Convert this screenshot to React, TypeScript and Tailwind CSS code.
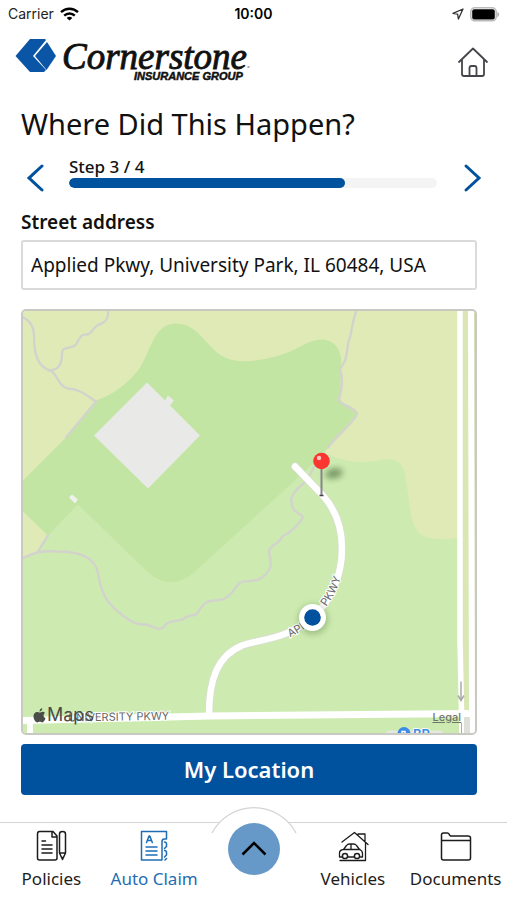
import { ReactNode, useState } from 'react';

const STEP = 3;
const TOTAL_STEPS = 4;

interface NavItemProps {
  label: string;
  active?: boolean;
  children: ReactNode;
}

function NavItem({ label, active = false, children }: NavItemProps) {
  return (
    <a
      href="#"
      aria-current={active ? 'page' : undefined}
      className={`flex flex-col items-center gap-1 pt-1.5 text-[17px] leading-6 whitespace-nowrap ${active ? 'text-[#1f6db5]' : 'text-[#1c1c1c]'}`}
    >
      <svg width="34" height="34" viewBox="0 0 34 34" fill="none" stroke="currentColor" strokeWidth="1.5" strokeLinecap="round" strokeLinejoin="round" aria-hidden="true">
        {children}
      </svg>
      {label}
    </a>
  );
}

function StatusBar() {
  return (
    <div className="grid h-7 grid-cols-3 items-center px-2 font-[Inter,sans-serif] text-sm text-[#222]">
      <div className="flex items-center gap-1.5">
        <span>Carrier</span>
        <svg width="19" height="14" viewBox="0 0 19 14" fill="none" stroke="#000" strokeWidth="2.4" aria-label="Wi-Fi">
          <path d="M1 5.2C5.8 .6 13.2 .6 18 5.2" />
          <path d="M4.2 8.6c3-2.9 7.6-2.9 10.6 0" />
          <path d="M9.5 13.6 6.7 10.9c1.6-1.5 4-1.5 5.6 0Z" fill="#000" stroke="none" />
        </svg>
      </div>
      <span className="text-center font-semibold text-black">10:00</span>
      <div className="flex items-center justify-end gap-1.5">
        <svg width="12" height="12" viewBox="0 0 12 12" fill="none" stroke="#333" strokeWidth="1.3" strokeLinejoin="round" aria-label="Location">
          <path d="M11 1 1 5.400l4.600.7.8 4.900Z" />
        </svg>
        <svg width="29" height="15" viewBox="0 0 29 15" aria-label="Battery">
          <rect x=".8" y=".8" width="25.4" height="13" rx="4" fill="#fff" stroke="#bbb" strokeWidth="1.6" />
          <rect x="2.2" y="2.2" width="22.6" height="10.2" rx="2" fill="#000" />
          <path d="M27.400 5v5c2.200-.7 2.200-4.300 0-5Z" fill="#aaa" />
        </svg>
      </div>
    </div>
  );
}

function Logo() {
  return (
    <svg width="240" height="48" viewBox="12 37 240 48" role="img" aria-label="Cornerstone Insurance Group">
      <path d="M30 39h15l1 1-13 16 13 14-2 2H30L15.500 56Z" fill="#0a55a5" />
      <path d="m47 42 9 14-9.500 14L35 56Z" fill="#0a55a5" />
      <text x="62" y="69" fontFamily="Liberation Serif, serif" fontStyle="italic" fontSize="37" fill="#111" stroke="#111" strokeWidth=".9">
        Cornerstone
      </text>
      <path d="M247.500 67h2" stroke="#555" />
      <text x="134" y="80" fontFamily="Liberation Sans, sans-serif" fontStyle="italic" fontWeight="700" fontSize="11" fill="#111" stroke="#111" strokeWidth=".5">
        INSURANCE GROUP
      </text>
    </svg>
  );
}

function MapView() {
  return (
    <div className="relative min-h-80 flex-1 overflow-hidden rounded-[5px] border-2 border-[#c9c9c4]">
      <svg className="absolute inset-0 h-full w-full" viewBox="23 310 452 423" preserveAspectRatio="xMidYMid slice" role="img" aria-label="Map of Applied Pkwy">
        <defs>
          <path id="applied" d="M290 637Q304 630 315 620C328 606 338 590 343 571" />
          <filter id="soft" x="-50%" y="-50%" width="200%" height="200%">
            <feGaussianBlur stdDeviation="3" />
          </filter>
        </defs>
        <rect x="22" y="309" width="456" height="426" fill="#cdebb0" />

        {/* fields */}
        <path d="M22 309H458V537Q445 540 433 538C420 536 415 530 411 515L406 480C405 464 398 457 384 459C368 462 350 464 329 454L260 440L22 490Z" fill="#e0eab6" />
        <path d="M22 508 48 535 38 551 22 558Z" fill="#e0eab6" />
        <path d="M22 481 66 437 96 400C114 394 126 384 138 370C152 350 152 325 175 323C200 323 206 348 225 357C240 364 264 360 285 353C300 348 308 339 323 339C335 340 342 350 341 363L340 402 357 413 325 451 306 470 195 571C180 585 163 585 148 572L78 504 48 535 22 510Z" fill="#c3e5a3" />
        <path d="M463 309h5v403h-5z" fill="#dce6b4" />
        <path d="M474 309h4v403h-4z" fill="#d6dcb6" />

        {/* buildings */}
        <path d="m147 382 18 18 3-5 6 5-4 5 30 30-52 53-54-53Z" fill="#e9e9e7" />
        <path d="m69 497 3-3 6 5-3 4Z" fill="#f0f0ee" />

        {/* trails */}
        <g fill="none" stroke="#d3d3cd" strokeWidth="2.400" strokeLinejoin="round" strokeLinecap="round">
          <path d="M22 316C30 320 34 327 34 335C34 355 38 366 50 370C57 372 58 386 68 388C80 389 84 393 96 401L66 437" />
          <path d="M108 309C109 318 106 322 99 324C94 326 92 332 88 334C81 333 80 337 76 344C72 349 63 345 62 352C62 362 60 369 50 370" />
          <path d="M357 309C353 318 352 328 350 337C347 342 348 352 345 360L340 369C344 380 341 390 339 399C341 406 351 404 357 413C354 423 338 433 328 447" />
          <path d="M314 466C310 474 308 480 300 486C290 495 290 500 293 508C297 514 302 513 303 517C297 525 293 531 282 536C279 545 270 543 269 551C270 560 275 567 262 577C255 583 246 579 240 582C232 590 230 600 215 600C202 600 202 608 196 614C190 616 187 614 183 619C177 621 168 619 163 627C157 631 153 625 146 624C138 624 134 623 127 618C106 604 101 592 98 573C95 555 75 551 58 551C43 550 37 551 22 558M38 551L48 535" />
        </g>

        {/* roads */}
        <g fill="none" stroke="#d9ddcf" strokeWidth="8" strokeLinecap="round">
          <path d="M295 466 322 494C334 507 342 525 342 548C342 575 331 601 312 617C287 639 263 638 242 645C218 655 209 678 209 714" />
        </g>
        <g fill="none" stroke="#fff" strokeWidth="7">
          <path d="M460 309V640L462 734" strokeWidth="5.500" />
          <path d="M471 309 472 734" strokeWidth="6" />
          <path d="M22 720 210 715.500 478 713" />
          <path d="M30 720V735" strokeWidth="6" />
          <path d="M295 466 322 494C334 507 342 525 342 548C342 575 331 601 312 617C287 639 263 638 242 645C218 655 209 678 209 714" strokeWidth="6.500" strokeLinecap="round" />
        </g>
        <path d="M464 717h6v18h-6z" fill="#dfdfdb" />
        <path d="M461 681v18M458 695l3 5 3-5" fill="none" stroke="#aaa" strokeWidth="1.500" />
        <path d="M461.500 722v12" stroke="#aaa" />

        {/* street names */}
        <g fontFamily="Inter, sans-serif" fontSize="11" fill="#666" stroke="#fff" strokeWidth="2" paintOrder="stroke">
          <text x="68" y="721" transform="rotate(-1 68 721)">UNIVERSITY PKWY</text>
          <text>
            <textPath href="#applied">API</textPath>
          </text>
          <text>
            <textPath href="#applied" startOffset="48">PKWY</textPath>
          </text>
        </g>

        {/* current location */}
        <circle cx="313" cy="619" r="15" fill="#557a45" opacity=".4" filter="url(#soft)" />
        <circle cx="312.500" cy="617" r="13.500" fill="#fff" />
        <circle cx="312.500" cy="617" r="8.300" fill="#00529f" />

        {/* pin */}
        <ellipse cx="334" cy="473" rx="9" ry="5" fill="#4c6b3c" opacity=".65" filter="url(#soft)" transform="rotate(-12 334 473)" />
        <path d="M321.500 467v28" stroke="#85858a" strokeWidth="2" />
        <path d="M319.500 495h4" stroke="#444" strokeWidth="1.500" />
        <circle cx="321.500" cy="460.500" r="8.300" fill="#fb3530" />
        <circle cx="319" cy="457.500" r="2.200" fill="#ffc7c2" />

        {/* fuel station */}
        <rect x="386" y="730" width="57" height="8" rx="3" fill="#e5e8dc" />
        <circle cx="404" cy="733" r="6.500" fill="#3b8ae6" />
        <path d="M402 736v-5h3v5" fill="none" stroke="#fff" strokeWidth="1.500" />
        <text x="413" y="738" fontFamily="Inter, sans-serif" fontWeight="600" fontSize="13" fill="#3b8ae6" stroke="#fff" strokeWidth="1.500" paintOrder="stroke">BP</text>
      </svg>
      <div className="absolute bottom-2 left-2.5 flex items-center gap-px font-[Inter,sans-serif] text-lg leading-5 text-[#4a4d48]">
        <svg width="13" height="15" viewBox="0 0 13 15" fill="currentColor" aria-hidden="true">
          <path d="M9.300.2c.1 1.700-1.200 3.200-2.800 3.200C6.400 1.700 7.700.4 9.300.2ZM12 5.100c-2.100 1.200-1.800 4.200.5 5.100-.6 1.800-1.900 4.200-3.300 4.200-.9 0-1.300-.6-2.400-.6-1.200 0-1.600.6-2.400.6C2.500 14.400.5 11 .5 8.200c0-2.700 1.700-4.300 3.500-4.300 1.100 0 1.900.7 2.700.7.700 0 1.600-.8 2.900-.8 1 0 1.900.5 2.400 1.300Z" />
        </svg>
        Maps
      </div>
      <a href="#" className="absolute right-3.5 bottom-2 font-[Inter,sans-serif] text-[11px] leading-4 font-medium text-[#6f776a] underline">Legal</a>
    </div>
  );
}

function StepArrow({ direction }: { direction: 'back' | 'next' }) {
  return (
    <button type="button" aria-label={direction === 'back' ? 'Previous step' : 'Next step'} className="px-1">
      <svg width="20" height="30" viewBox="0 0 20 30" fill="none" stroke="#00529f" strokeWidth="3" strokeLinecap="round">
        <path d={direction === 'back' ? 'M17 3 4 15l13 12' : 'M3 3l13 12L3 27'} />
      </svg>
    </button>
  );
}

export default function App() {
  const [address, setAddress] = useState('Applied Pkwy, University Park, IL 60484, USA');

  return (
    <div className="flex min-h-screen flex-col bg-white font-['Noto_Sans',sans-serif] text-[#111]">
      <StatusBar />

      <header className="flex items-start justify-between pt-[9px] pr-4 pl-3">
        <Logo />
        <button type="button" aria-label="Home" className="pt-[9px]">
          <svg width="36" height="34" viewBox="0 0 36 34" fill="none" stroke="#444449" strokeWidth="1.800" strokeLinecap="round" strokeLinejoin="round">
            <path d="M4 16 18 2.500 32 16M7 14v14q0 2 2 2h18q2 0 2-2V14" />
            <path d="M14.500 30v-8q0-2 2-2h3q2 0 2 2v8" />
          </svg>
        </button>
      </header>

      <main className="flex flex-1 flex-col pr-[30px] pl-[21px]">
        <h1 className="mt-[19px] text-[29px] leading-10">Where Did This Happen?</h1>

        <div className="-mr-2.5 mt-3 flex items-end">
          <StepArrow direction="back" />
          <div className="mr-[22px] ml-5 flex-1 pb-[5px]">
            <p className="text-[17px] leading-[22px] font-medium">
              Step {STEP} / {TOTAL_STEPS}
            </p>
            <div role="progressbar" aria-label="Claim progress" aria-valuenow={STEP} aria-valuemax={TOTAL_STEPS} className="h-2.5 overflow-hidden rounded-full bg-[#f4f4f4]">
              <div className="h-full rounded-full bg-[#00529f]" style={{ width: `${(STEP / TOTAL_STEPS) * 100}%` }} />
            </div>
          </div>
          <StepArrow direction="next" />
        </div>

        <label htmlFor="address" className="mt-[15px] text-[19px] leading-7 font-semibold">
          Street address
        </label>
        <input
          id="address"
          value={address}
          onChange={(event) => setAddress(event.target.value)}
          className="mt-1 h-[50px] rounded-[3px] border-2 border-[#dadada] px-2 text-[19px] outline-none"
        />

        <div className="mt-[19px] flex flex-1 flex-col">
          <MapView />
        </div>

        <button type="button" className="mt-[9px] h-[51px] rounded bg-[#00529f] text-[22px] font-semibold text-white">
          My Location
        </button>
      </main>

      <nav className="relative mt-[27px] grid grid-cols-[1fr_1fr_96px_1fr_1fr] border-t border-[#d4d4d4] pb-[9px]">
        <NavItem label="Policies">
          <path d="M8 2.500h11l4 4.500v22q0 2-2 2H5.500q-2 0-2-2v-24q0-2.500 2-2.500ZM18 3v5h5M8 12h3.500M8 16h10M8 20h10M8 24h10" />
          <path d="M25.500 5q0-2.500 3-2.500t3 2.500v19l-3 6.500-3-6.500ZM25.500 24h6M27.500 28.500h2" />
        </NavItem>
        <NavItem label="Auto Claim" active>
          <path d="M25 31V12.500q0-2.500 2.500-2.500h2V2.500h-25V31Z" />
          <path d="M27.500 13q2 0 2 2v2.500l-2 2M27.500 21.500q2 0 2 2V26l-2 2M29.500 29.500l-1.500 1.500" />
          <path d="M9 18h11M9 22h11M9 26h11" />
          <path d="m9.500 13.500 2.500-6.500h.8l2.500 6.500M10.500 11.500h3.800" />
        </NavItem>
        <div className="flex justify-center">
          <svg className="absolute bottom-0 h-[94px] w-[86px]" viewBox="0 0 86 94" fill="none" aria-hidden="true">
            <path d="M1 27A47.500 47.500 0 0 1 85 27V60H1Z" fill="#fff" />
            <path d="M1 27A47.500 47.500 0 0 1 85 27" stroke="#d4d4d4" strokeWidth="1.300" />
          </svg>
          <button type="button" aria-label="Open menu" className="relative flex h-[52px] w-[52px] items-center justify-center rounded-full bg-[#6699c8]">
            <svg width="28" height="18" viewBox="0 0 28 18" fill="none" stroke="#000" strokeWidth="2.500">
              <path d="M2.500 14.500 14 3l11.500 11.500" />
            </svg>
          </button>
        </div>
        <NavItem label="Vehicles">
          <path d="M6 13 18.500 3.500 32 15.500M22 6V5h7v8M29.500 14v17.500H4M3.500 28v-4q0-3 4-3.500l3-4q1-1.500 3-1.500h4q2 0 3 1.500l3 4q3 1 3 4v3.500h-2M6 28H3.500M12 28h6M8 20.500h16M15 15v5.500" strokeWidth="1.300" />
          <circle cx="9" cy="27" r="2.600" />
          <circle cx="21" cy="27" r="2.600" />
        </NavItem>
        <NavItem label="Documents">
          <path d="M2.500 29V6q0-2 2-2h4q1.500 0 2 2l1 1H29q2.500 0 2.500 2v20q0 2-2 2h-25q-2 0-2-2ZM2.500 11.500h29" />
        </NavItem>
      </nav>
    </div>
  );
}
